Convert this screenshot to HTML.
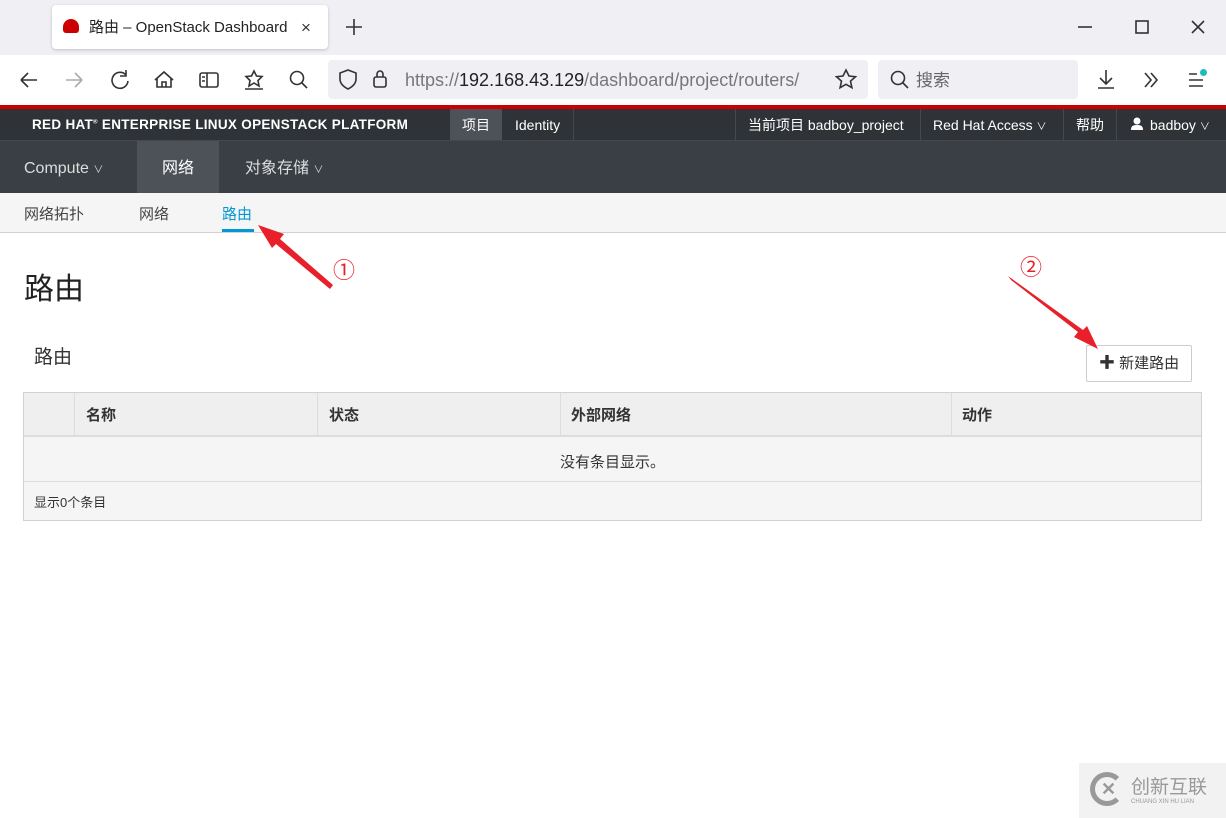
<!DOCTYPE html>
<html><head><meta charset="utf-8"><style>
*{box-sizing:border-box;margin:0;padding:0}
body{width:1226px;height:818px;overflow:hidden;background:#fff;font-family:"Liberation Sans","Noto Sans CJK SC",sans-serif;position:relative;color:#333;line-height:1}
.a{position:absolute;white-space:nowrap}
</style></head><body>
<div class="a" style="left:0;top:0;width:1226px;height:55px;background:#f0f0f4"></div>
<div class="a" style="left:52px;top:5px;width:276px;height:44px;background:#fff;border-radius:4px;box-shadow:0 1px 3px rgba(0,0,0,.2)"></div>
<div class="a" style="left:63px;top:19px;width:16px;height:14px;background:#c00;border-radius:8px 8px 3px 3px"></div>
<div class="a" style="left:89px;top:20px;font-size:15px;color:#222">路由 – OpenStack Dashboard</div>
<div class="a" style="left:301px;top:19px;font-size:17px;color:#333">×</div>
<svg class="a" style="left:0;top:0" width="1226" height="105" fill="none" stroke="#333" stroke-width="1.6">
<path d="M346 27h16M354 19v16"/>
<path d="M1078 27h14"/>
<rect x="1136" y="21" width="12" height="12"/>
<path d="M1192 21l12 12M1204 21l-12 12"/>
<path d="M21 80h16M21 80l7-7M21 80l7 7"/>
<path d="M66 80h16M82 80l-7-7M82 80l-7 7" stroke="#aaa"/>
<path d="M126 75a8 8 0 1 0 2 6M126 70v6h-6"/>
<path d="M155 80l9-8 9 8M157 78v9h14v-9M162 87v-5h4v5"/>
<rect x="200" y="73" width="18" height="14" rx="2"/><path d="M207 73v14M202 77h3M202 81h3"/>
<path d="M254 71l2.5 5 5.5.5-4 4 1 5.5-5-3-5 3 1-5.5-4-4 5.5-.5z"/><path d="M245 89h18"/>
<circle cx="297" cy="78" r="6.5"/><path d="M302 83l5 5"/>
<path d="M348 70l8 3v6c0 5-4 8-8 10-4-2-8-5-8-10v-6z"/>
<rect x="374" y="77" width="12" height="10" rx="2"/><path d="M377 77v-3a3 3 0 0 1 6 0v3"/>
<path d="M846 70l3 6 6.5.7-5 4.5 1.4 6.5-5.9-3.4-5.9 3.4 1.4-6.5-5-4.5 6.5-.7z"/>
<circle cx="898" cy="78" r="6.5"/><path d="M903 83l5 5"/>
<path d="M1106 70v14M1100 78l6 6 6-6M1098 88h16"/>
<path d="M1145 73l6 7-6 7M1151 73l6 7-6 7"/>
<path d="M1189 74h8M1189 80h14M1189 86h14"/>
</svg>
<div class="a" style="left:328px;top:60px;width:540px;height:39px;background:#f0f0f4;border-radius:4px;z-index:-1"></div>
<div class="a" style="left:405px;top:71px;font-size:18px;color:#777">https://<span style="color:#222">192.168.43.129</span>/dashboard/project/routers/</div>
<div class="a" style="left:878px;top:60px;width:200px;height:39px;background:#f0f0f4;border-radius:4px;z-index:-1"></div>
<div class="a" style="left:916px;top:72px;font-size:17px;color:#666">搜索</div>
<div class="a" style="left:1200px;top:69px;width:7px;height:7px;background:#2bb;border-radius:50%"></div>
<div class="a" style="left:0;top:105px;width:1226px;height:4px;background:#c00"></div>
<div class="a" style="left:0;top:109px;width:1226px;height:32px;background:#2f3337;border-bottom:1px solid #44494e"></div>
<div class="a" style="left:32px;top:118px;font-size:13.5px;color:#fff;font-weight:bold;letter-spacing:.3px">RED HAT<sup style="font-size:6px">®</sup> ENTERPRISE LINUX OPENSTACK PLATFORM</div>
<div class="a" style="left:450px;top:109px;width:52px;height:31px;background:#4d5258"></div>
<div class="a" style="left:462px;top:118px;font-size:14px;color:#fff">项目</div>
<div class="a" style="left:502px;top:109px;width:72px;height:31px;border-right:1px solid #44494e"></div>
<div class="a" style="left:515px;top:118px;font-size:14px;color:#fff">Identity</div>
<div class="a" style="left:735px;top:109px;width:1px;height:31px;background:#44494e"></div>
<div class="a" style="left:748px;top:118px;font-size:14px;color:#fff">当前项目 badboy_project</div>
<div class="a" style="left:920px;top:109px;width:1px;height:31px;background:#44494e"></div>
<div class="a" style="left:933px;top:118px;font-size:14px;color:#fff">Red Hat Access <span style="font-size:10px">∨</span></div>
<div class="a" style="left:1063px;top:109px;width:1px;height:31px;background:#44494e"></div>
<div class="a" style="left:1076px;top:118px;font-size:14px;color:#fff">帮助</div>
<div class="a" style="left:1116px;top:109px;width:1px;height:31px;background:#44494e"></div>
<svg class="a" style="left:1131px;top:117px" width="12" height="14" fill="#fff"><circle cx="6" cy="4" r="3.5"/><path d="M0 13c0-4 2-5 6-5s6 1 6 5z"/></svg>
<div class="a" style="left:1150px;top:118px;font-size:14px;color:#fff">badboy <span style="font-size:10px">∨</span></div>
<div class="a" style="left:0;top:141px;width:1226px;height:52px;background:#393f44"></div>
<div class="a" style="left:137px;top:141px;width:82px;height:52px;background:#4d5258"></div>
<div class="a" style="left:24px;top:161px;font-size:16px;color:#ddd">Compute <span style="font-size:10px">∨</span></div>
<div class="a" style="left:162px;top:161px;font-size:16px;color:#fff">网络</div>
<div class="a" style="left:245px;top:161px;font-size:16px;color:#ddd">对象存储 <span style="font-size:10px">∨</span></div>
<div class="a" style="left:0;top:193px;width:1226px;height:40px;background:#f5f5f5;border-bottom:1px solid #d1d1d1"></div>
<div class="a" style="left:24px;top:207px;font-size:15px;color:#444">网络拓扑</div>
<div class="a" style="left:139px;top:207px;font-size:15px;color:#444">网络</div>
<div class="a" style="left:222px;top:207px;font-size:15px;color:#0099d3">路由</div>
<div class="a" style="left:222px;top:229px;width:32px;height:3px;background:#0099d3"></div>
<div class="a" style="left:24px;top:275px;font-size:30px;color:#222">路由</div>
<div class="a" style="left:34px;top:348px;font-size:19px;color:#333">路由</div>
<div class="a" style="left:1086px;top:345px;width:106px;height:37px;border:1px solid #ccc;border-radius:2px;background:#fff"></div>
<div class="a" style="left:1099px;top:356px;font-size:15px;color:#333"><b style="font-size:16px">✚</b> 新建路由</div>
<div class="a" style="left:23px;top:392px;width:1179px;height:129px;border:1px solid #d1d1d1;background:#f5f5f5"></div>
<div class="a" style="left:24px;top:393px;width:1177px;height:44px;background:#efefef;border-bottom:2px solid #ddd"></div>
<div class="a" style="left:74px;top:393px;width:1px;height:44px;background:#ddd"></div>
<div class="a" style="left:317px;top:393px;width:1px;height:44px;background:#ddd"></div>
<div class="a" style="left:560px;top:393px;width:1px;height:44px;background:#ddd"></div>
<div class="a" style="left:951px;top:393px;width:1px;height:44px;background:#ddd"></div>
<div class="a" style="left:86px;top:408px;font-size:15px;font-weight:bold;color:#333">名称</div>
<div class="a" style="left:329px;top:408px;font-size:15px;font-weight:bold;color:#333">状态</div>
<div class="a" style="left:571px;top:408px;font-size:15px;font-weight:bold;color:#333">外部网络</div>
<div class="a" style="left:962px;top:408px;font-size:15px;font-weight:bold;color:#333">动作</div>
<div class="a" style="left:24px;top:455px;width:1177px;text-align:center;font-size:15px;color:#333">没有条目显示。</div>
<div class="a" style="left:24px;top:481px;width:1177px;height:1px;background:#ddd"></div>
<div class="a" style="left:34px;top:496px;font-size:13px;color:#333">显示0个条目</div>
<svg class="a" style="left:0;top:0" width="1226" height="818">
<polygon points="333,285 330,289 276,244 272,248 258,225 284,234 280,239" fill="#e8202a"/>
<polygon points="1008,276 1011,280 1078,332 1074,337 1098,349 1087,326 1083,330" fill="#e8202a"/>
</svg>
<div class="a" style="left:333px;top:260px;font-size:22px;color:#e8202a">①</div>
<div class="a" style="left:1020px;top:257px;font-size:22px;color:#e8202a">②</div>
<div class="a" style="left:1079px;top:763px;width:147px;height:55px;background:#f2f2f2"></div>
<div class="a" style="left:1090px;top:772px;width:34px;height:34px;border:5px solid #999;border-radius:50%;border-right-color:transparent"></div>
<div class="a" style="left:1101px;top:780px;font-size:18px;color:#999;font-weight:bold">✕</div>
<div class="a" style="left:1131px;top:778px;font-size:19px;color:#999">创新互联</div>
<div class="a" style="left:1131px;top:799px;font-size:6px;color:#999">CHUANG XIN HU LIAN</div>
</body></html>
